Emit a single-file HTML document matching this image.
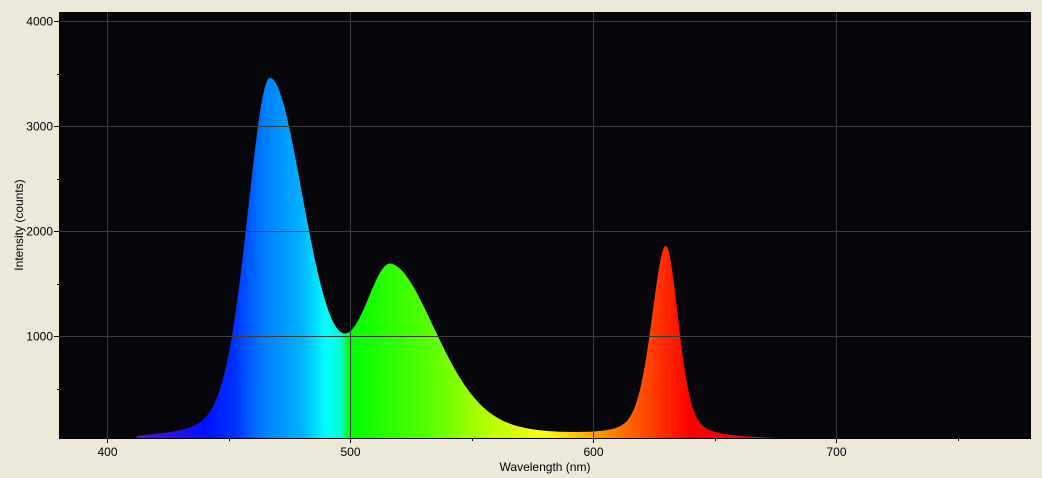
<!DOCTYPE html>
<html><head><meta charset="utf-8"><style>
html,body{margin:0;padding:0;background:#ece9d8;width:1042px;height:478px;overflow:hidden}
svg{display:block;font-family:"Liberation Sans",sans-serif}
</style></head><body>
<svg id="s" width="1042" height="478" xmlns="http://www.w3.org/2000/svg">
<defs>
<linearGradient id="g" gradientUnits="userSpaceOnUse" x1="59" y1="0" x2="1031" y2="0">
<stop offset="0" stop-color="#6a10b0"/>
</linearGradient>
</defs>
<rect x="59" y="12" width="972" height="426" fill="#060509"/>
<path id="sp" fill="url(#g)" d=""/>
<g id="grid" stroke="#3c3c3c" stroke-width="1"></g>
<line x1="59" y1="438.5" x2="1031" y2="438.5" stroke="#000"/>
<g id="lab" font-size="12" fill="#000"></g>
<text x="545" y="471" font-size="12" text-anchor="middle">Wavelength (nm)</text>
<text transform="translate(23,225) rotate(-90)" font-size="12" text-anchor="middle">Intensity (counts)</text>
</svg>
<script>
var X=function(nm){return 107+(nm-400)*2.43};
var Y=function(v){return 441-v*0.105};
function pk(x,c,a,sl,sr,m){var s=x<c?sl:sr;var d=(x-c)/s;return a*((1-m)*Math.exp(-d*d/2)+m/(1+d*d*0.7));}
function f(x){return pk(x,467,3420,9.5,15,0.3)+pk(x,517,1560,12,19,0.3)+pk(x,630,1830,6,5.2,0.4);}
var d="M59,438";
for(var px=59;px<=1031;px++){var nm=400+(px-107)/2.43;var v=f(nm);if(nm<412)v=Math.min(v,8);var y=Math.max(Y(v),12);if(y>438)y=438;d+=" L"+px+","+y.toFixed(1);}
d+=" L1031,438 Z";
document.getElementById('sp').setAttribute('d',d);
var stops=[[380,"#6a10b0"],[415,"#5010e0"],[440,"#0010ff"],[452,"#0030ff"],[465,"#0080ff"],[480,"#00b0ff"],[490,"#00ffff"],[496,"#00ffd0"],[500,"#00ff00"],[530,"#50ff00"],[560,"#c0ff00"],[580,"#ffff00"],[600,"#ffa000"],[620,"#ff5000"],[640,"#ff0000"],[780,"#ff0000"]];
var g=document.getElementById('g');g.innerHTML="";
stops.forEach(function(s){var e=document.createElementNS("http://www.w3.org/2000/svg","stop");e.setAttribute("offset",((X(s[0])-59)/972).toFixed(4));e.setAttribute("stop-color",s[1]);g.appendChild(e);});
var gr=document.getElementById('grid'),lb=document.getElementById('lab'),h="",l="";
[400,500,600,700].forEach(function(n){var x=Math.round(X(n))+0.5;h+='<line x1="'+x+'" y1="12" x2="'+x+'" y2="438"/>';l+='<text x="'+x+'" y="456" text-anchor="middle">'+n+'</text>';});
[1000,2000,3000,4000].forEach(function(v){var y=Math.round(Y(v))+0.5;h+='<line x1="59" y1="'+y+'" x2="1031" y2="'+y+'"/>';h+='<line x1="54" y1="'+y+'" x2="59" y2="'+y+'" stroke="#000"/>';l+='<text x="53" y="'+(y+4)+'" text-anchor="end">'+v+'</text>';});
[500,1500,2500,3500].forEach(function(v){var y=Math.round(Y(v))+0.5;h+='<line x1="57" y1="'+y+'" x2="59" y2="'+y+'" stroke="#000"/>';});
[450,550,650,750].forEach(function(n){var x=Math.round(X(n))+0.5;h+='<line x1="'+x+'" y1="438" x2="'+x+'" y2="441" stroke="#000"/>';});
[400,500,600,700].forEach(function(n){var x=Math.round(X(n))+0.5;h+='<line x1="'+x+'" y1="438" x2="'+x+'" y2="443" stroke="#000"/>';});
gr.innerHTML=h;lb.innerHTML=l;
</script>
</body></html>
